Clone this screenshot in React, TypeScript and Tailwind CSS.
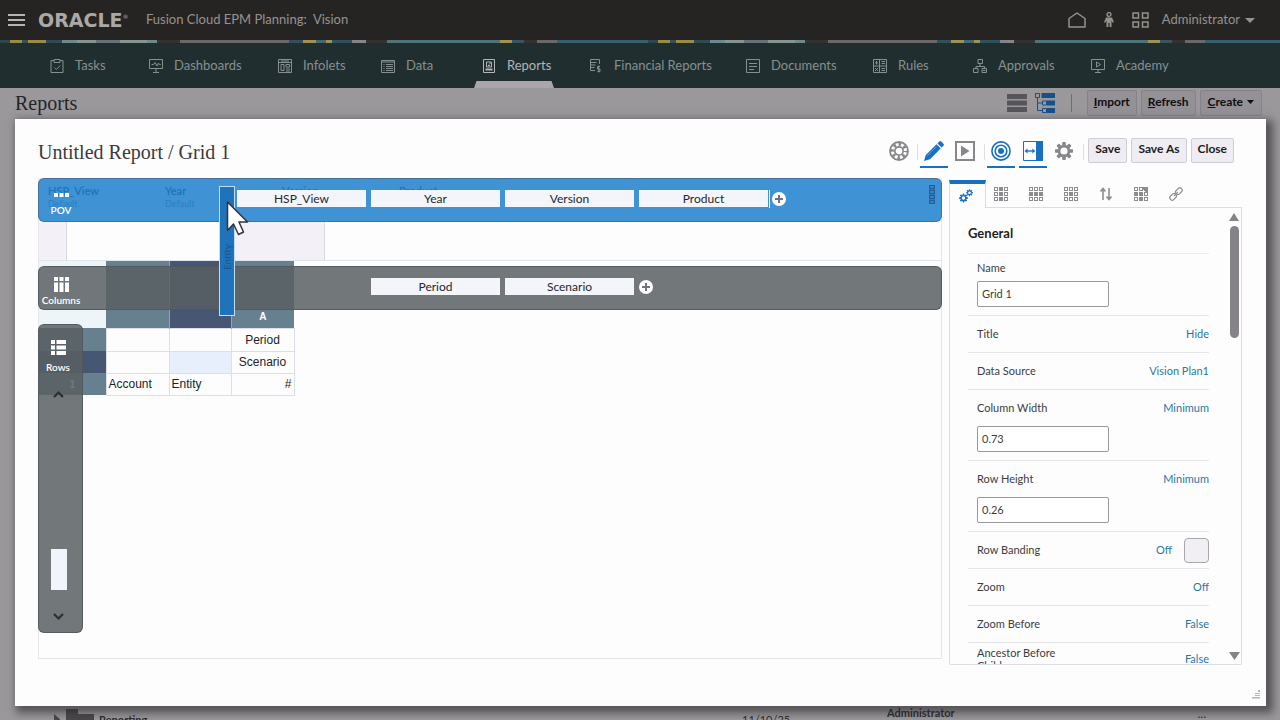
import React from "react";

type IconProps = { className?: string };

const stripPeriod = 648;
const stripBands: [number, number, string][] = [
  [0, 10, "#2b4650"],
  [10, 12, "#9a8b45"],
  [22, 6, "#35505a"],
  [28, 18, "#9a8b45"],
  [46, 16, "#2b4b55"],
  [62, 15, "#6c8a8c"],
  [77, 19, "#86958f"],
  [96, 24, "#66747a"],
  [120, 27, "#86958f"],
  [147, 10, "#6c8a8c"],
  [157, 23, "#343231"],
  [180, 109, "#6b686a"],
  [289, 14, "#2f515c"],
  [303, 13, "#a09250"],
  [316, 10, "#3f6a72"],
  [326, 6, "#a09250"],
  [332, 20, "#2f515c"],
  [352, 14, "#86868a"],
  [366, 21, "#343231"],
  [387, 113, "#4f7478"],
  [500, 12, "#a09250"],
  [512, 12, "#34565f"],
  [524, 13, "#343231"],
  [537, 20, "#6b686a"],
  [557, 91, "#35606c"],
];

function NavIcon({ children }: { children: React.ReactNode }) {
  return (
    <svg width="14" height="14" viewBox="0 0 14 14" fill="none" stroke="currentColor" strokeWidth="1" className="shrink-0" aria-hidden="true">
      {children}
    </svg>
  );
}

const navItems: { label: string; width: string; active?: boolean; icon: React.ReactNode }[] = [
  {
    label: "Tasks",
    width: "w-[99px]",
    icon: (
      <>
        <path d="M4 1.5H1v12h12v-12h-3M4 .5h6v3H4z" />
        <path d="M4.5 8.5l2 2L10 6.5" />
      </>
    ),
  },
  {
    label: "Dashboards",
    width: "w-[129px]",
    icon: (
      <>
        <path d="M.5.5h13v9H.5zM7 9.5v4M4 13.5h6" />
        <path d="M2.5 5.5h2l1.500-2 2 3.500 1.500-3 .8 1.500h1.500" />
      </>
    ),
  },
  {
    label: "Infolets",
    width: "w-[103px]",
    icon: <path d="M.5.5h13v13H.5zM.5 3.500h13M3 5.500h3v6H3zM8 5.500h3.500v2.500H8zM8 10h4M8 12h4M3 2h8" />,
  },
  {
    label: "Data",
    width: "w-[101px]",
    icon: <path d="M.5 1.500h13v12H.5zM.5 3h13M2.500 5.500h1M5 5.500h7M2.500 7.500h1M5 7.500h7M2.500 9.500h1M5 9.500h7M2.500 11.500h1M5 11.500h7" />,
  },
  {
    label: "Reports",
    width: "w-[107px]",
    active: true,
    icon: (
      <>
        <path d="M1.500.5h11v13h-11zM4.500 3h5v5h-5z" />
        <path d="M7 5.500L9 3.500M6 6.500h2" />
        <path d="M3.500 10.500h7" strokeWidth="2" />
      </>
    ),
  },
  {
    label: "Financial Reports",
    width: "w-[157px]",
    icon: (
      <>
        <path d="M10.500 5V.5h-9v11H6M1.500 3.500h6M1.500 6h5M1.500 8.500h4" />
        <path d="M11 7.500H8.500v2.500H11v2.500H8.500M9.800 6.500v7" />
      </>
    ),
  },
  {
    label: "Documents",
    width: "w-[127px]",
    icon: <path d="M.5.5h13v13H.5zM3 4.500h8M3 7.500h8M3 10.500h5" />,
  },
  {
    label: "Rules",
    width: "w-[100px]",
    icon: (
      <>
        <path d="M.5.5h13v13H.5zM6.500.5v13M.5 7h13" />
        <path d="M3.500 2v3.500M2 3.800h3M2 9l3 3M5 9l-3 3M8.500 2.500h3.500M8.500 4.500h3.500M8.500 9.500h3.500M8.500 11.500h3.500" />
      </>
    ),
  },
  {
    label: "Approvals",
    width: "w-[118px]",
    icon: <path d="M5 .5h4.500v4H5zM7 4.500v3M3 9.500v-2h8.500v2M.5 9.500H5v4H.5zM9 9.500h4.500v4H9zM10 11.500h2.500" />,
  },
  {
    label: "Academy",
    width: "w-[90px]",
    icon: (
      <>
        <path d="M.5.5h13v10H.5zM7 10.500v3M4 13.500h6" />
        <path d="M5.500 3l4 2.500-4 2.500z" />
      </>
    ),
  },
];

function GearPath({ teeth }: { teeth: number }) {
  return (
    <g>
      {Array.from({ length: teeth }, (_, i) => (
        <rect key={i} x="-2" y="-10" width="4" height="5" rx="1" fill="currentColor" transform={`rotate(${(360 / teeth) * i})`} />
      ))}
      <circle r="5.500" fill="none" stroke="currentColor" strokeWidth="3" />
    </g>
  );
}

function GearIcon({ className }: IconProps) {
  return (
    <svg width="18" height="18" viewBox="-10 -10 20 20" className={className} aria-hidden="true">
      <GearPath teeth={8} />
    </svg>
  );
}

function LifeRingIcon() {
  return (
    <svg width="20" height="20" viewBox="0 0 20 20" fill="none" stroke="currentColor" aria-hidden="true">
      <circle cx="10" cy="10" r="9" strokeWidth="1.800" />
      <circle cx="10" cy="10" r="6.500" strokeWidth="3.400" strokeDasharray="2.400 2.705" strokeDashoffset="1.200" />
      <circle cx="10" cy="10" r="4.200" strokeWidth="1.700" />
    </svg>
  );
}

function PencilIcon() {
  return (
    <svg width="20" height="20" viewBox="0 0 20 20" fill="currentColor" aria-hidden="true">
      <path d="M0 20l1.800-6L12.500 3.300l4.200 4.200L6 18.200z" />
      <path d="M13.400 2.400L15.200.6a1.500 1.500 0 0 1 2.100 0l2.100 2.100a1.500 1.500 0 0 1 0 2.100l-1.800 1.800z" />
      <path d="M3.200 14.800l9-9" stroke="#8fc0ea" strokeWidth=".6" />
    </svg>
  );
}

function PlayBoxIcon() {
  return (
    <svg width="20" height="20" viewBox="0 0 20 20" aria-hidden="true">
      <path d="M1 1h18v18H1z" fill="none" stroke="currentColor" strokeWidth="2" />
      <path d="M6 4.500v11l8.500-5.500z" fill="currentColor" />
    </svg>
  );
}

function TargetIcon() {
  return (
    <svg width="20" height="20" viewBox="0 0 20 20" fill="none" stroke="currentColor" strokeWidth="1.600" aria-hidden="true">
      <circle cx="10" cy="10" r="9.100" />
      <circle cx="10" cy="10" r="5.800" />
      <circle cx="10" cy="10" r="3" fill="currentColor" stroke="none" />
    </svg>
  );
}

function SidePanelIcon() {
  return (
    <svg width="20" height="20" viewBox="0 0 20 20" aria-hidden="true">
      <path d="M.5.5h19v19H.5z" fill="none" stroke="currentColor" />
      <path d="M13 0h7v20h-7z" fill="currentColor" />
      <path d="M3 10h8" stroke="currentColor" strokeWidth="1.400" />
      <path d="M1.500 10l3-2.500v5zM12.300 10l-3-2.500v5z" fill="currentColor" />
    </svg>
  );
}

function CellsIcon({ filled, corner }: { filled: number[]; corner?: boolean }) {
  return (
    <svg width="14" height="14" viewBox="0 0 14 14" aria-hidden="true">
      {Array.from({ length: 9 }, (_, i) => {
        const x = (i % 3) * 5;
        const y = Math.floor(i / 3) * 5;
        return (
          <rect
            key={i}
            x={x + 0.5}
            y={y + 0.5}
            width="3"
            height="3"
            fill={filled.includes(i) ? "currentColor" : "none"}
            stroke="currentColor"
          />
        );
      })}
      {corner && <path d="M7 0h7v7z" fill="currentColor" stroke="currentColor" strokeWidth=".5" />}
    </svg>
  );
}

function PlusButton({ label }: { label: string }) {
  return (
    <button type="button" aria-label={label} className="flex size-[14px] items-center justify-center rounded-full bg-white text-[#777078]">
      <svg width="8" height="8" viewBox="0 0 8 8" stroke="currentColor" strokeWidth="2" aria-hidden="true">
        <path d="M0 4h8M4 0v8" />
      </svg>
    </button>
  );
}

function Chip({ children }: { children: string }) {
  return (
    <button type="button" className="flex h-[17px] w-[129px] items-center justify-center bg-[#f4f4fb] text-xs leading-4 text-[#26262c]">
      {children}
    </button>
  );
}

function ToolButton({ label, active, children }: { label: string; active?: boolean; children: React.ReactNode }) {
  return (
    <button
      type="button"
      aria-label={label}
      className={
        active
          ? "flex h-8 w-7 items-center justify-center border-b-2 border-[#1a70bf] text-[#1a70c0]"
          : "flex h-8 w-7 items-center justify-center border-b-2 border-transparent text-[#87878b]"
      }
    >
      {children}
    </button>
  );
}

function DialogButton({ children }: { children: string }) {
  return (
    <button type="button" className="h-[25px] rounded-xs border border-[#cfcdd3] bg-[#efedf3] px-[6px] pb-[3px] text-[12px] font-bold leading-5 text-[#1c1c20]">
      {children}
    </button>
  );
}

type Property = { label: string; value?: string; input?: string; swatch?: boolean };

const properties: Property[] = [
  { label: "Title", value: "Hide" },
  { label: "Data Source", value: "Vision Plan1" },
  { label: "Column Width", value: "Minimum", input: "0.73" },
  { label: "Row Height", value: "Minimum", input: "0.26" },
  { label: "Row Banding", value: "Off", swatch: true },
  { label: "Zoom", value: "Off" },
  { label: "Zoom Before", value: "False" },
];

const inputClass =
  "block h-[26px] w-[132px] rounded-xs border border-[#99979c] bg-white px-1 pb-[2px] text-[11px] text-[#3c3c42] outline-none";

function PropertyRow({ label, value, input, swatch }: Property) {
  const id = label.toLowerCase().replace(/ /g, "-");
  return (
    <div className={input ? "h-[71px] border-b border-[#e6e5e8] pl-[9px]" : "h-[37px] border-b border-[#e6e5e8] pl-[9px]"}>
      <div className="flex h-9 items-center justify-between">
        <label htmlFor={id}>{label}</label>
        <span className="flex items-center gap-3">
          <button type="button" id={input ? undefined : id} className="text-[#2a789f]">
            {value}
          </button>
          {swatch && <button type="button" aria-label="Row banding colour" className="size-[25px] rounded-[4px] border border-[#a9a7ac] bg-[#f1eff4]" />}
        </span>
      </div>
      {input && <input id={id} defaultValue={input} className={inputClass} />}
    </div>
  );
}

const povMembers = ["HSP_View", "Year", "Version", "Product"];

export default function App() {
  return (
    <div className="relative flex h-screen flex-col overflow-hidden bg-[#9b989c] font-[Lato,'Open_Sans',sans-serif] text-[#2b2b2e]">
      <header className="flex h-10 shrink-0 items-center bg-[#262422] pl-2 pr-[25px] text-[#96938f]">
        <button type="button" aria-label="Menu">
          <svg width="17" height="12" viewBox="0 0 17 12" stroke="#b5b4b2" strokeWidth="2" aria-hidden="true">
            <path d="M0 1h17M0 6h17M0 11h17" />
          </svg>
        </button>
        <span className="ml-[13px] flex w-[108px] items-center font-['DejaVu_Sans',sans-serif] text-[19px] font-bold leading-none text-[#aaa9a7]">
          ORACLE<sup className="text-[6px] font-normal">®</sup>
        </span>
        <h1 className="text-[13px] whitespace-pre">Fusion Cloud EPM Planning:  Vision</h1>
        <div className="ml-auto flex items-center">
          <button type="button" aria-label="Home">
            <svg width="18" height="16" viewBox="0 0 18 16" fill="none" stroke="currentColor" strokeWidth="1.500" aria-hidden="true">
              <path d="M1 15V6.500L9 1l8 5.500V15z" strokeLinejoin="round" />
            </svg>
          </button>
          <button type="button" aria-label="Accessibility" className="ml-[17px]">
            <svg width="12" height="16" viewBox="0 0 12 16" aria-hidden="true">
              <circle cx="6" cy="2.500" r="1.900" fill="none" stroke="currentColor" strokeWidth="1.400" />
              <path d="M3 5.500h6l2 4.800-1.200.5L8.500 8.500V15H6.600v-4H5.400v4H3.500V8.500l-1.300 2.300-1.200-.5z" fill="currentColor" />
            </svg>
          </button>
          <button type="button" aria-label="Applications" className="ml-[17px]">
            <svg width="17" height="16" viewBox="0 0 17 16" fill="none" stroke="currentColor" strokeWidth="1.500" aria-hidden="true">
              <path d="M1 1h5.500v5H1zM10.500 1H16v5h-5.500zM1 10h5.500v5H1zM10.500 10H16v5h-5.500z" />
            </svg>
          </button>
          <button type="button" className="ml-[13px] flex items-center gap-[5px] text-[13px]">
            Administrator
            <svg width="10" height="5" viewBox="0 0 10 5" fill="currentColor" aria-hidden="true">
              <path d="M0 0h10L5 5z" />
            </svg>
          </button>
        </div>
      </header>

      <svg className="h-[3px] w-full shrink-0" aria-hidden="true">
        <defs>
          <pattern id="strip" width={stripPeriod} height="3" patternUnits="userSpaceOnUse">
            {stripBands.map(([x, w, color]) => (
              <rect key={x} x={x} width={w} height="3" fill={color} />
            ))}
          </pattern>
        </defs>
        <rect width="100%" height="3" fill="url(#strip)" />
      </svg>

      <nav className="flex h-[45px] shrink-0 bg-[#202e30] pl-[50px] text-[13px]">
        {navItems.map((item) => (
          <a
            key={item.label}
            href={`#${item.label}`}
            className={`relative flex h-[45px] shrink-0 items-center gap-[11px] whitespace-nowrap ${item.width} ${
              item.active ? "text-[#b3b5b8]" : "text-[#879091]"
            }`}
          >
            <NavIcon>{item.icon}</NavIcon>
            {item.label}
            {item.active && (
              <svg width="80" height="7" viewBox="0 0 80 7" className="absolute bottom-0 -left-2" aria-hidden="true">
                <path d="M2.500 0h75L80 7H0z" fill="#aaa6ab" />
              </svg>
            )}
          </a>
        ))}
      </nav>

      <main className="flex min-h-0 flex-1 flex-col">
        <div className="flex h-[31px] shrink-0 items-center pr-[18px] pb-[2px] pl-[15px]">
          <h2 className="font-['Liberation_Serif',serif] text-[20px] leading-none text-[#252528]">Reports</h2>
          <div className="ml-auto flex items-center">
            <button type="button" aria-label="List view">
              <svg width="20" height="18" viewBox="0 0 20 18" fill="#55555a" aria-hidden="true">
                <path d="M0 0h20v5H0zM0 6.500h20v5H0zM0 13h20v5H0z" />
              </svg>
            </button>
            <button type="button" aria-label="Tree view" className="ml-2">
              <svg width="21" height="20" viewBox="0 0 21 20" aria-hidden="true">
                <path d="M6.500 0H20v5H6.500zM12 7.500h8v5h-8zM12 15h8v5h-8z" fill="#17508c" />
                <path d="M.5.500h4v4h-4zM7.500 8h4v4h-4zM7.500 15.500h4v4h-4zM2.500 4.500v13H7M2.500 10H7" fill="none" stroke="#17508c" />
              </svg>
            </button>
            <span className="mx-[15px] h-[18px] w-px bg-[#6f6c71]" />
            <div className="flex gap-1 text-[12px] font-bold text-[#0e0e10]">
              <button type="button" className="h-[26px] rounded-xs border border-[#858288] bg-[#949196] px-[6px] pb-[2px]">
                <u>I</u>mport
              </button>
              <button type="button" className="h-[26px] rounded-xs border border-[#858288] bg-[#949196] px-[6px] pb-[2px]">
                <u>R</u>efresh
              </button>
              <button type="button" className="flex h-[26px] items-center gap-1 rounded-xs border border-[#858288] bg-[#949196] px-[7px] pb-[2px]">
                <span>
                  <u>C</u>reate
                </span>
                <svg width="7" height="4" viewBox="0 0 7 4" aria-hidden="true">
                  <path d="M0 0h7L3.500 4z" fill="currentColor" />
                </svg>
              </button>
            </div>
          </div>
        </div>
        <div className="flex-1" />
        <div className="flex h-[14px] shrink-0 overflow-hidden pl-[53px] pr-[74px] text-xs">
          <svg width="42" height="14" viewBox="0 0 42 14" fill="#4a484c" className="shrink-0" aria-hidden="true">
            <path d="M1 8l6 5v1H1z" />
            <path d="M13 3h12v5h16v6H13z" />
          </svg>
          <span className="ml-1 w-[643px] pt-[6px] text-[11px] font-bold leading-4">Reporting</span>
          <span className="w-[145px] pt-[6px] text-[11px] leading-4">11/10/25</span>
          <span className="text-[11px] font-bold leading-[14px]">Administrator</span>
          <span className="ml-auto pt-[2px] leading-3">...</span>
        </div>
      </main>

      <section
        role="dialog"
        aria-label="Untitled Report / Grid 1"
        className="absolute top-[119px] right-[14px] bottom-[14px] left-[15px] flex flex-col bg-[#fdfdfd] pr-[24px] pl-[23px] shadow-[4px_4px_8px_3px_rgba(40,38,42,0.6)]"
      >
        <div className="flex h-[59px] shrink-0 items-center justify-between pt-[6px]">
          <h2 className="font-['Liberation_Serif',serif] text-[20px] leading-none text-[#3a3a3e]">Untitled Report / Grid 1</h2>
          <div className="flex items-center pr-[8px]">
            <ToolButton label="Help">
              <LifeRingIcon />
            </ToolButton>
            <span className="mr-[2px] ml-1 h-4 w-px bg-[#dedde0]" />
            <ToolButton label="Edit" active>
              <PencilIcon />
            </ToolButton>
            <span className="w-[3px]" />
            <ToolButton label="Preview">
              <PlayBoxIcon />
            </ToolButton>
            <span className="mr-[2px] ml-[5px] h-4 w-px bg-[#dedde0]" />
            <ToolButton label="Point of view" active>
              <TargetIcon />
            </ToolButton>
            <span className="w-1" />
            <ToolButton label="Side panel" active>
              <SidePanelIcon />
            </ToolButton>
            <span className="w-[3px]" />
            <ToolButton label="Settings">
              <GearIcon />
            </ToolButton>
            <span className="mr-1 ml-[5px] h-4 w-px bg-[#dedde0]" />
            <div className="flex gap-[4px] pb-[2px]">
              <DialogButton>Save</DialogButton>
              <DialogButton>Save As</DialogButton>
              <DialogButton>Close</DialogButton>
            </div>
          </div>
        </div>

        <div className="mb-[41px] flex min-h-0 flex-1 gap-[7px]">
          <div className="relative mb-[6px] min-w-0 flex-1 border border-[#e6e5e9]">
            <div className="flex h-[43px] gap-[70px] pt-1 pl-[9px] text-[#2c2c34]">
              {povMembers.map((member) => (
                <div key={member} className="w-[47px]">
                  <p className="text-[11px] leading-[15px] font-semibold">{member}</p>
                  {member !== "Version" && member !== "Product" && <p className="text-[9px] leading-3 text-[#77808c]">Default</p>}
                </div>
              ))}
            </div>
            <div className="flex h-[39px] border-b border-[#dfe5ea]">
              <div className="w-7 border-r border-[#d9d7e0] bg-[#f3f1f7]" />
              <div className="w-[167px]" />
              <div className="w-[91px] border-r border-[#d9d7e0] bg-[#f3f1f7]" />
            </div>
            <table className="w-[255px] table-fixed border-collapse font-['Liberation_Sans',sans-serif] text-[12px] text-[#222226]">
              <colgroup>
                <col className="w-[67px]" />
                <col className="w-[63px]" />
                <col className="w-[62px]" />
                <col className="w-[63px]" />
              </colgroup>
              <thead>
                <tr className="h-[67px] align-bottom text-white">
                  <td className="bg-[#eef5f9]" />
                  <th className="border-r border-[#90a5b3] bg-[#67808f]" />
                  <th className="border-r border-[#90a5b3] bg-[#475673]" />
                  <th className="bg-[#67808f] pb-1 text-[10px]">A</th>
                </tr>
              </thead>
              <tbody>
                <tr className="h-[23px]">
                  <th className="bg-[#67808f]" />
                  <td className="border border-[#dcdfe8]" />
                  <td className="border border-[#dcdfe8]" />
                  <td className="border border-[#dcdfe8] p-0 text-center">Period</td>
                </tr>
                <tr className="h-[22px]">
                  <th className="bg-[#475673]" />
                  <td className="border border-[#dcdfe8]" />
                  <td className="border border-[#dcdfe8] bg-[#e8effc]" />
                  <td className="border border-[#dcdfe8] p-0 text-center">Scenario</td>
                </tr>
                <tr className="h-[22px]">
                  <th className="bg-[#67808f] p-0 text-[10px] text-white">1</th>
                  <td className="border border-[#dcdfe8] p-0 pl-[2px]">Account</td>
                  <td className="border border-[#dcdfe8] p-0 pl-[2px]">Entity</td>
                  <td className="border border-[#dcdfe8] p-0 pr-[2px] text-right">#</td>
                </tr>
              </tbody>
            </table>

            {/* Drop zones float above the grid while a dimension is dragged */}
            <div className="absolute -inset-px flex flex-col items-start">
              <div className="flex h-11 w-full shrink-0 rounded-md border border-[#4a6a88]/80 bg-[#1d7fcb]/85">
                <div className="flex w-11 flex-col items-center pt-[14px] text-[10px] leading-4 font-semibold text-white">
                  <svg width="15" height="5" viewBox="0 0 15 5" fill="currentColor" aria-hidden="true">
                    <path d="M0 0h4v4H0zM5.500 0h4v4h-4zM11 0h4v4h-4z" />
                  </svg>
                  <span className="mt-1">POV</span>
                </div>
                <div className="ml-[154px] flex gap-[5px] pt-[11px]">
                  {povMembers.map((member) => (
                    <Chip key={member}>{member}</Chip>
                  ))}
                </div>
                <div className="mt-[10px] flex h-[19px] items-center gap-[2px] self-start pt-px">
                  <span className="ml-px h-[18px] w-px bg-white" />
                  <PlusButton label="Add to POV" />
                </div>
                <svg width="6" height="19" viewBox="0 0 6 19" fill="none" stroke="#1f5f9b" strokeWidth="1.400" className="mt-[6px] mr-[6px] ml-auto" aria-hidden="true">
                  <path d="M.5.500h5v3h-5zM.5 5.500h5v3h-5zM.5 10.500h5v3h-5zM.5 15.500h5v3h-5z" />
                </svg>
              </div>

              <div className="mt-11 flex h-11 w-full shrink-0 rounded-md border border-[#4f565b]/80 bg-[#595f63]/85">
                <div className="flex w-11 flex-col items-center pt-[10px] text-[10px] leading-4 font-semibold text-white">
                  <svg width="15" height="15" viewBox="0 0 15 15" fill="currentColor" aria-hidden="true">
                    <path d="M0 0h4v4H0zM5.500 0h4v4h-4zM11 0h4v4h-4zM0 5.500h4V15H0zM5.500 5.500h4V15h-4zM11 5.500h4V15h-4z" />
                  </svg>
                  Columns
                </div>
                <div className="ml-72 flex gap-[5px] pt-[11px]">
                  <Chip>Period</Chip>
                  <Chip>Scenario</Chip>
                </div>
                <div className="ml-[5px] pt-[13px]">
                  <PlusButton label="Add to columns" />
                </div>
              </div>

              <div className="mt-[14px] mb-[26px] flex min-h-0 w-[45px] flex-1 flex-col items-center rounded-md border border-[#4f565b]/80 bg-[#595f63]/85 pt-[15px] pr-1 pb-[11px] text-[10px] leading-4 font-semibold text-white">
                <svg width="15" height="15" viewBox="0 0 15 15" fill="currentColor" aria-hidden="true">
                  <path d="M0 0h4v4H0zM0 5.500h4v4H0zM0 11h4v4H0zM5.500 0H15v4H5.500zM5.500 5.500H15v4H5.500zM5.500 11H15v4H5.500z" />
                </svg>
                <span className="mt-1 -ml-px">Rows</span>
                <button type="button" aria-label="Scroll up" className="mt-[15px] text-[#2b2f33]">
                  <svg width="11" height="8" viewBox="0 0 11 8" fill="none" stroke="currentColor" strokeWidth="2.200" aria-hidden="true">
                    <path d="M1 7l4.500-4.500L10 7" />
                  </svg>
                </button>
                <span className="mt-auto h-[41px] w-4 bg-[#f1f4fd]" />
                <button type="button" aria-label="Scroll down" className="mt-[23px] text-[#2b2f33]">
                  <svg width="11" height="8" viewBox="0 0 11 8" fill="none" stroke="currentColor" strokeWidth="2.200" aria-hidden="true">
                    <path d="M1 1l4.500 4.500L10 1" />
                  </svg>
                </button>
              </div>
            </div>

            {/* Dimension being dragged, with the pointer over it */}
            <div className="absolute top-[7px] left-[180px] flex h-[130px] w-4 items-center justify-center border border-[#c4dcf2] bg-[#1f73ba] pt-3">
              <span className="rotate-180 text-[10px] leading-3 text-[#1b568e] [writing-mode:vertical-rl]">Entity</span>
            </div>
            <svg width="24" height="38" viewBox="0 0 24 38" className="absolute top-[21px] left-[187px]" aria-hidden="true">
              <path d="M1.500 2v28.500l6-6.500 5 10.500 5-2.500-4.500-10h8.500z" fill="#fff" stroke="#333338" strokeWidth="1.500" strokeLinejoin="round" />
            </svg>
          </div>

          <aside className="flex w-[293px] shrink-0 flex-col">
            <div role="tablist" className="mt-[2px] flex h-[28px] shrink-0">
              <button type="button" role="tab" aria-selected="true" aria-label="General" className="flex w-[37px] items-center justify-center border-x border-t-4 border-x-[#dddce0] border-t-[#1a70bf] pr-1 text-[#1a70c0]">
                <svg width="14" height="14" viewBox="0 0 28 28" aria-hidden="true">
                  <g transform="translate(9 18) scale(.88)">
                    <GearPath teeth={8} />
                  </g>
                  <g transform="translate(21 7.500) scale(.68)">
                    <GearPath teeth={8} />
                  </g>
                </svg>
              </button>
              <div className="flex flex-1 items-center gap-[21px] border-b border-[#dddce0] pl-2 text-[#8d8b8f]">
                <button type="button" role="tab" aria-label="Column properties">
                  <CellsIcon filled={[1, 4, 7]} />
                </button>
                <button type="button" role="tab" aria-label="Row properties">
                  <CellsIcon filled={[3, 4, 5]} />
                </button>
                <button type="button" role="tab" aria-label="Cell properties">
                  <CellsIcon filled={[4]} />
                </button>
                <button type="button" role="tab" aria-label="Sort">
                  <svg width="14" height="14" viewBox="0 0 14 14" fill="none" stroke="currentColor" strokeWidth="1.600" aria-hidden="true">
                    <path d="M4 13V2M1.500 4.500L4 1.500l2.500 3M10 1v11M7.500 9.500l2.500 3 2.500-3" />
                  </svg>
                </button>
                <button type="button" role="tab" aria-label="Conditional format">
                  <CellsIcon filled={[3, 4, 7]} corner />
                </button>
                <button type="button" role="tab" aria-label="Links">
                  <svg width="14" height="14" viewBox="0 0 24 24" fill="none" stroke="currentColor" strokeWidth="2" strokeLinecap="round" aria-hidden="true">
                    <g transform="rotate(-45 12 12)">
                      <rect x="-1" y="8" width="12" height="8" rx="3.500" />
                      <rect x="13" y="8" width="12" height="8" rx="3.500" />
                      <path d="M8 12h8" />
                    </g>
                  </svg>
                </button>
              </div>
            </div>

            <div className="flex min-h-0 flex-1 rounded-b-xs border border-t-0 border-[#dddce0]">
              <div className="min-w-0 flex-1 overflow-hidden pl-[18px] text-[11px] text-[#3c3c42]">
                <h3 className="flex h-[46px] items-center border-b border-[#ecebee] pt-[6px] text-[13px] font-bold text-[#1f1f23]">General</h3>
                <div className="h-[62px] border-b border-[#e6e5e8] pt-[5px] pl-[9px]">
                  <label htmlFor="name" className="block h-[22px] leading-[18px]">
                    Name
                  </label>
                  <input id="name" defaultValue="Grid 1" className={inputClass} />
                </div>
                {properties.map((property) => (
                  <PropertyRow key={property.label} {...property} />
                ))}
                <div className="flex items-start justify-between pt-[3px] pl-[9px]">
                  <label htmlFor="ancestor" className="w-[100px] leading-[13px]">
                    Ancestor Before Children
                  </label>
                  <button type="button" id="ancestor" className="pt-[5px] text-[#2a789f]">
                    False
                  </button>
                </div>
              </div>
              <div className="mr-[2px] ml-[20px] flex w-[10px] shrink-0 flex-col items-center pt-[5px] pb-1 text-[#858387]">
                <svg width="10" height="8" viewBox="0 0 10 8" fill="currentColor" aria-hidden="true">
                  <path d="M5 0l5 8H0z" />
                </svg>
                <span className="mt-[5px] h-28 w-[9px] rounded-full bg-current" />
                <svg width="11" height="8" viewBox="0 0 11 8" fill="currentColor" className="mt-auto" aria-hidden="true">
                  <path d="M0 0h11L5.500 8z" />
                </svg>
              </div>
            </div>
          </aside>
        </div>

        <svg width="9" height="9" viewBox="0 0 9 9" fill="#b5b4b8" className="absolute right-[6px] bottom-[7px]" aria-hidden="true">
          <path d="M7 0h2v2H7zM4 3h5v1H4zM4 5h5v1H4zM1 7h8v1.500H1z" />
        </svg>
      </section>
    </div>
  );
}
